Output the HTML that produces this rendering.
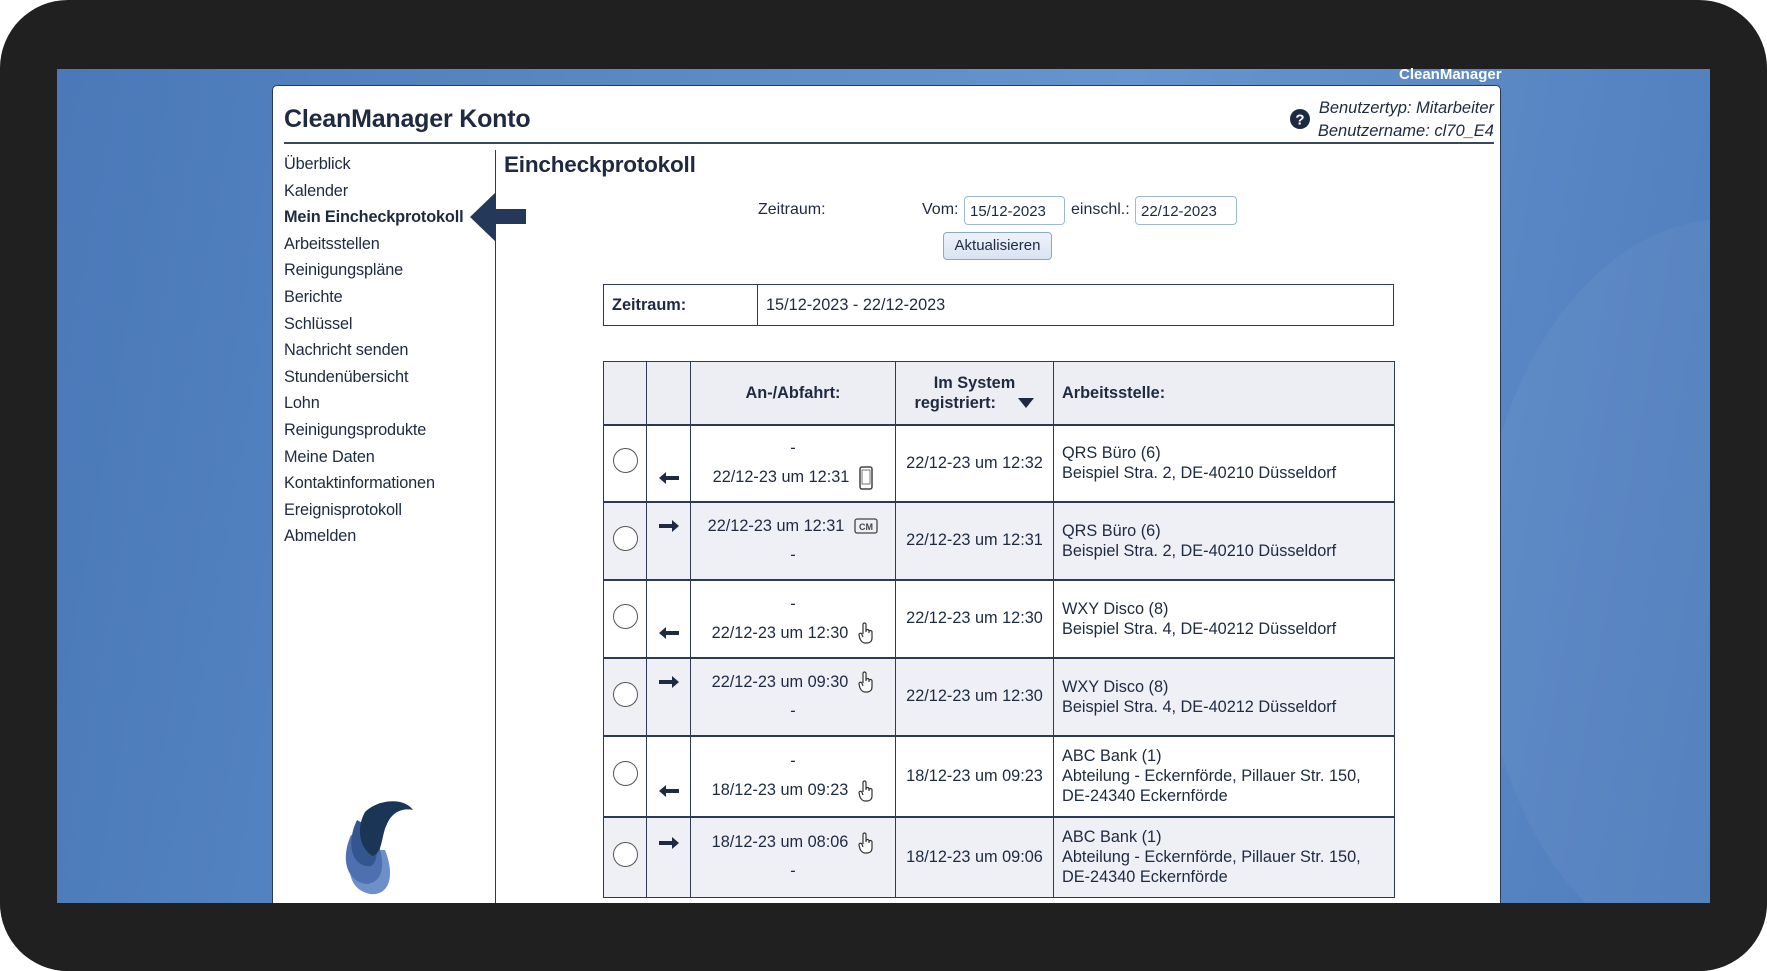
<!DOCTYPE html>
<html><head><meta charset="utf-8"><style>
*{margin:0;padding:0;box-sizing:border-box}
body{width:1767px;height:971px;background:#fff;position:relative;overflow:hidden;font-family:"Liberation Sans",sans-serif;color:#1d2a40}
#frame{position:absolute;left:0;top:0;width:1767px;height:971px;background:#212021;border-radius:68px}
#blue{position:absolute;left:57px;top:69px;width:1653px;height:834px;background:linear-gradient(100deg,#4a78b8 0%,#5d8dc8 40%,#6595cf 60%,#4f7cbc 100%);overflow:hidden}
#glow{position:absolute;left:1420px;top:150px;width:500px;height:750px;border-radius:50%;background:rgba(255,255,255,0.04)}
#cmlabel{position:absolute;left:1399px;top:66px;font-weight:bold;color:#fff;font-size:15px}
#card{position:absolute;left:272px;top:85px;width:1229px;height:830px;background:#fff;border:1px solid #2b3a55;border-radius:5px 5px 0 0}
.abs{position:absolute}
h1{position:absolute;left:284px;top:105px;font-size:25px;font-weight:bold;white-space:nowrap;letter-spacing:-0.2px}
#hline{position:absolute;left:284px;top:142px;width:1210px;height:2px;background:#3a4760}
.ui{position:absolute;right:273px;font-style:italic;font-size:16.5px;text-align:right;white-space:nowrap}
#nav{position:absolute;left:284px;top:151px;font-size:16.3px;line-height:26.6px;letter-spacing:-0.15px}
#nav .b{font-weight:bold}
#vdiv{position:absolute;left:495px;top:150px;width:1px;height:760px;background:#2b3a55}
h2{position:absolute;left:504px;top:152px;font-size:22.5px;font-weight:bold;letter-spacing:-0.2px}
.lbl{position:absolute;font-size:16px}
.inp{position:absolute;height:29px;border:1px solid #9db8dc;border-radius:4px;font-size:15px;padding:6px 5px;background:#fff}
#btn{position:absolute;left:943px;top:232px;width:109px;height:28px;border:1px solid #8aa7cf;border-radius:4px;background:linear-gradient(#eef3fa,#d8e3f2);font-size:15px;text-align:center;line-height:26px}
table{border-collapse:collapse;position:absolute;table-layout:fixed;font-size:16.3px}
td,th{border:1px solid #2b3a55}
#sum{left:603px;top:284px;width:791px;height:41px}
#sum td{padding:0 8px;height:41px}
#main{left:603px;top:361px;width:791px}
#main th{background:#ededf4;font-weight:bold;text-align:center;height:63px;line-height:20px}
#main tr.r td{border-top:2px solid #2b3a55}
#main tr.g td{background:#efeff6}
.c1{text-align:center}
.circ{display:inline-block;width:25px;height:25px;border:1.5px solid #555;border-radius:50%;background:#fff}
.tl{line-height:29px;text-align:center;height:29px}
.c2{text-align:center}
.c4{text-align:center}
.c5{padding-left:8px;line-height:20px}
.ico{display:inline-block;vertical-align:middle;margin-left:10px}
.ar{display:inline-block;vertical-align:middle}
</style></head><body>
<div id="frame"></div>
<div id="blue"><div id="glow"></div></div>
<div id="cmlabel">CleanManager</div>
<div id="card"></div>
<h1>CleanManager Konto</h1>
<svg class="abs" style="left:1290px;top:109px" width="20" height="20" viewBox="0 0 20 20"><circle cx="10" cy="10" r="10" fill="#1d2a40"/><text x="10" y="15.5" font-family="Liberation Sans" font-weight="bold" font-size="15" fill="#fff" text-anchor="middle">?</text></svg>
<div class="ui" style="top:99px">Benutzertyp: Mitarbeiter</div>
<div class="ui" style="top:122px">Benutzername: cl70_E4</div>
<div id="hline"></div>
<div id="nav">Überblick<br>Kalender<br><span class="b">Mein Eincheckprotokoll</span><br>Arbeitsstellen<br>Reinigungspläne<br>Berichte<br>Schlüssel<br>Nachricht senden<br>Stundenübersicht<br>Lohn<br>Reinigungsprodukte<br>Meine Daten<br>Kontaktinformationen<br>Ereignisprotokoll<br>Abmelden</div>
<div id="vdiv"></div>
<svg class="abs" style="left:470px;top:192px" width="58" height="50" viewBox="0 0 58 50"><path d="M0 25 L26 0 L26 17 L56 17 L56 32 L26 32 L26 50 Z" fill="#24395a"/></svg>
<svg class="abs" style="left:335px;top:790px" width="100" height="110" viewBox="0 0 100 110">
<path d="M20 60 C10 80 15 100 35 104 C55 106 60 85 50 60 Z" fill="#6f8fc8"/>
<path d="M16 45 C5 70 12 92 32 94 C50 92 50 70 42 50 Z" fill="#4e70b0"/>
<path d="M22 30 C10 55 18 78 36 76 C46 70 40 50 40 40 Z" fill="#34568f"/>
<path d="M30 22 C45 8 70 8 78 20 C70 18 58 20 52 34 C46 46 48 62 38 66 C26 60 20 40 30 22 Z" fill="#1a3556"/>
</svg>
<h2>Eincheckprotokoll</h2>
<div class="lbl" style="left:758px;top:201px">Zeitraum:</div>
<div class="lbl" style="left:922px;top:201px">Vom:</div>
<div class="inp" style="left:964px;top:196px;width:101px">15/12-2023</div>
<div class="lbl" style="left:1071px;top:201px">einschl.:</div>
<div class="inp" style="left:1135px;top:196px;width:102px">22/12-2023</div>
<div id="btn">Aktualisieren</div>
<table id="sum"><colgroup><col style="width:154px"><col></colgroup><tr><td style="font-weight:bold">Zeitraum:</td><td>15/12-2023 - 22/12-2023</td></tr></table>
<table id="main"><colgroup><col style="width:43px"><col style="width:44px"><col style="width:205px"><col style="width:158px"><col style="width:341px"></colgroup>
<tr><th></th><th></th><th>An-/Abfahrt:</th><th>Im System<br>registriert: <svg style="margin-left:18px;vertical-align:middle" width="16" height="10" viewBox="0 0 16 10"><path d="M0 0 H16 L8 10 Z" fill="#1d2a40"/></svg></th><th style="text-align:left;padding-left:8px">Arbeitsstelle:</th></tr>
<tr class="r" style="height:77px"><td class="c1"><span class="circ"></span></td><td class="c2"><div class="tl"></div><div class="tl"><svg class="ar" width="20" height="12" viewBox="0 0 20 12"><path d="M0 6 L7 0 V4 H20 V8 H7 V12 Z" fill="#1d2a40"/></svg></div></td><td><div class="tl">-</div><div class="tl">22/12-23 um 12:31<svg class="ico" width="14" height="24" viewBox="0 0 14 24"><rect x="1" y="1" width="12" height="22" rx="2" fill="none" stroke="#444" stroke-width="1.5"/><rect x="3" y="4" width="8" height="14" fill="none" stroke="#777"/></svg></div></td><td class="c4">22/12-23 um 12:32</td><td class="c5">QRS Büro (6)<br>Beispiel Stra. 2, DE-40210 Düsseldorf</td></tr>
<tr class="r g" style="height:78px"><td class="c1"><span class="circ"></span></td><td class="c2"><div class="tl"><svg class="ar" width="20" height="12" viewBox="0 0 20 12"><path d="M20 6 L13 0 V4 H0 V8 H13 V12 Z" fill="#1d2a40"/></svg></div><div class="tl"></div></td><td><div class="tl">22/12-23 um 12:31<svg class="ico" width="24" height="16" viewBox="0 0 24 16"><rect x="1" y="1" width="22" height="14" rx="2" fill="none" stroke="#444" stroke-width="1.3"/><text x="12" y="12" font-family="Liberation Sans" font-size="9" font-weight="bold" fill="#444" text-anchor="middle">CM</text></svg></div><div class="tl">-</div></td><td class="c4">22/12-23 um 12:31</td><td class="c5">QRS Büro (6)<br>Beispiel Stra. 2, DE-40210 Düsseldorf</td></tr>
<tr class="r" style="height:78px"><td class="c1"><span class="circ"></span></td><td class="c2"><div class="tl"></div><div class="tl"><svg class="ar" width="20" height="12" viewBox="0 0 20 12"><path d="M0 6 L7 0 V4 H20 V8 H7 V12 Z" fill="#1d2a40"/></svg></div></td><td><div class="tl">-</div><div class="tl">22/12-23 um 12:30<svg class="ico" width="16" height="22" viewBox="0 0 16 22"><path d="M5 12 V2.5 a1.5 1.5 0 0 1 3 0 V10 M8 9 a1.5 1.5 0 0 1 3 0 V11 M11 10 a1.5 1.5 0 0 1 3 0 V16 C14 19 12 21 9 21 H7 C5 21 3 19 2 17 L1 13 a1.5 1.5 0 0 1 3 -0.5 L5 15" fill="#fff" stroke="#333" stroke-width="1.2"/></svg></div></td><td class="c4">22/12-23 um 12:30</td><td class="c5">WXY Disco (8)<br>Beispiel Stra. 4, DE-40212 Düsseldorf</td></tr>
<tr class="r g" style="height:78px"><td class="c1"><span class="circ"></span></td><td class="c2"><div class="tl"><svg class="ar" width="20" height="12" viewBox="0 0 20 12"><path d="M20 6 L13 0 V4 H0 V8 H13 V12 Z" fill="#1d2a40"/></svg></div><div class="tl"></div></td><td><div class="tl">22/12-23 um 09:30<svg class="ico" width="16" height="22" viewBox="0 0 16 22"><path d="M5 12 V2.5 a1.5 1.5 0 0 1 3 0 V10 M8 9 a1.5 1.5 0 0 1 3 0 V11 M11 10 a1.5 1.5 0 0 1 3 0 V16 C14 19 12 21 9 21 H7 C5 21 3 19 2 17 L1 13 a1.5 1.5 0 0 1 3 -0.5 L5 15" fill="#fff" stroke="#333" stroke-width="1.2"/></svg></div><div class="tl">-</div></td><td class="c4">22/12-23 um 12:30</td><td class="c5">WXY Disco (8)<br>Beispiel Stra. 4, DE-40212 Düsseldorf</td></tr>
<tr class="r" style="height:81px"><td class="c1"><span class="circ"></span></td><td class="c2"><div class="tl"></div><div class="tl"><svg class="ar" width="20" height="12" viewBox="0 0 20 12"><path d="M0 6 L7 0 V4 H20 V8 H7 V12 Z" fill="#1d2a40"/></svg></div></td><td><div class="tl">-</div><div class="tl">18/12-23 um 09:23<svg class="ico" width="16" height="22" viewBox="0 0 16 22"><path d="M5 12 V2.5 a1.5 1.5 0 0 1 3 0 V10 M8 9 a1.5 1.5 0 0 1 3 0 V11 M11 10 a1.5 1.5 0 0 1 3 0 V16 C14 19 12 21 9 21 H7 C5 21 3 19 2 17 L1 13 a1.5 1.5 0 0 1 3 -0.5 L5 15" fill="#fff" stroke="#333" stroke-width="1.2"/></svg></div></td><td class="c4">18/12-23 um 09:23</td><td class="c5">ABC Bank (1)<br>Abteilung - Eckernförde, Pillauer Str. 150,<br>DE-24340 Eckernförde</td></tr>
<tr class="r g" style="height:81px"><td class="c1"><span class="circ"></span></td><td class="c2"><div class="tl"><svg class="ar" width="20" height="12" viewBox="0 0 20 12"><path d="M20 6 L13 0 V4 H0 V8 H13 V12 Z" fill="#1d2a40"/></svg></div><div class="tl"></div></td><td><div class="tl">18/12-23 um 08:06<svg class="ico" width="16" height="22" viewBox="0 0 16 22"><path d="M5 12 V2.5 a1.5 1.5 0 0 1 3 0 V10 M8 9 a1.5 1.5 0 0 1 3 0 V11 M11 10 a1.5 1.5 0 0 1 3 0 V16 C14 19 12 21 9 21 H7 C5 21 3 19 2 17 L1 13 a1.5 1.5 0 0 1 3 -0.5 L5 15" fill="#fff" stroke="#333" stroke-width="1.2"/></svg></div><div class="tl">-</div></td><td class="c4">18/12-23 um 09:06</td><td class="c5">ABC Bank (1)<br>Abteilung - Eckernförde, Pillauer Str. 150,<br>DE-24340 Eckernförde</td></tr>
</table>
<div class="abs" style="left:0;top:903px;width:1767px;height:68px;background:#212021;border-radius:0 0 68px 68px"></div>
</body></html>
